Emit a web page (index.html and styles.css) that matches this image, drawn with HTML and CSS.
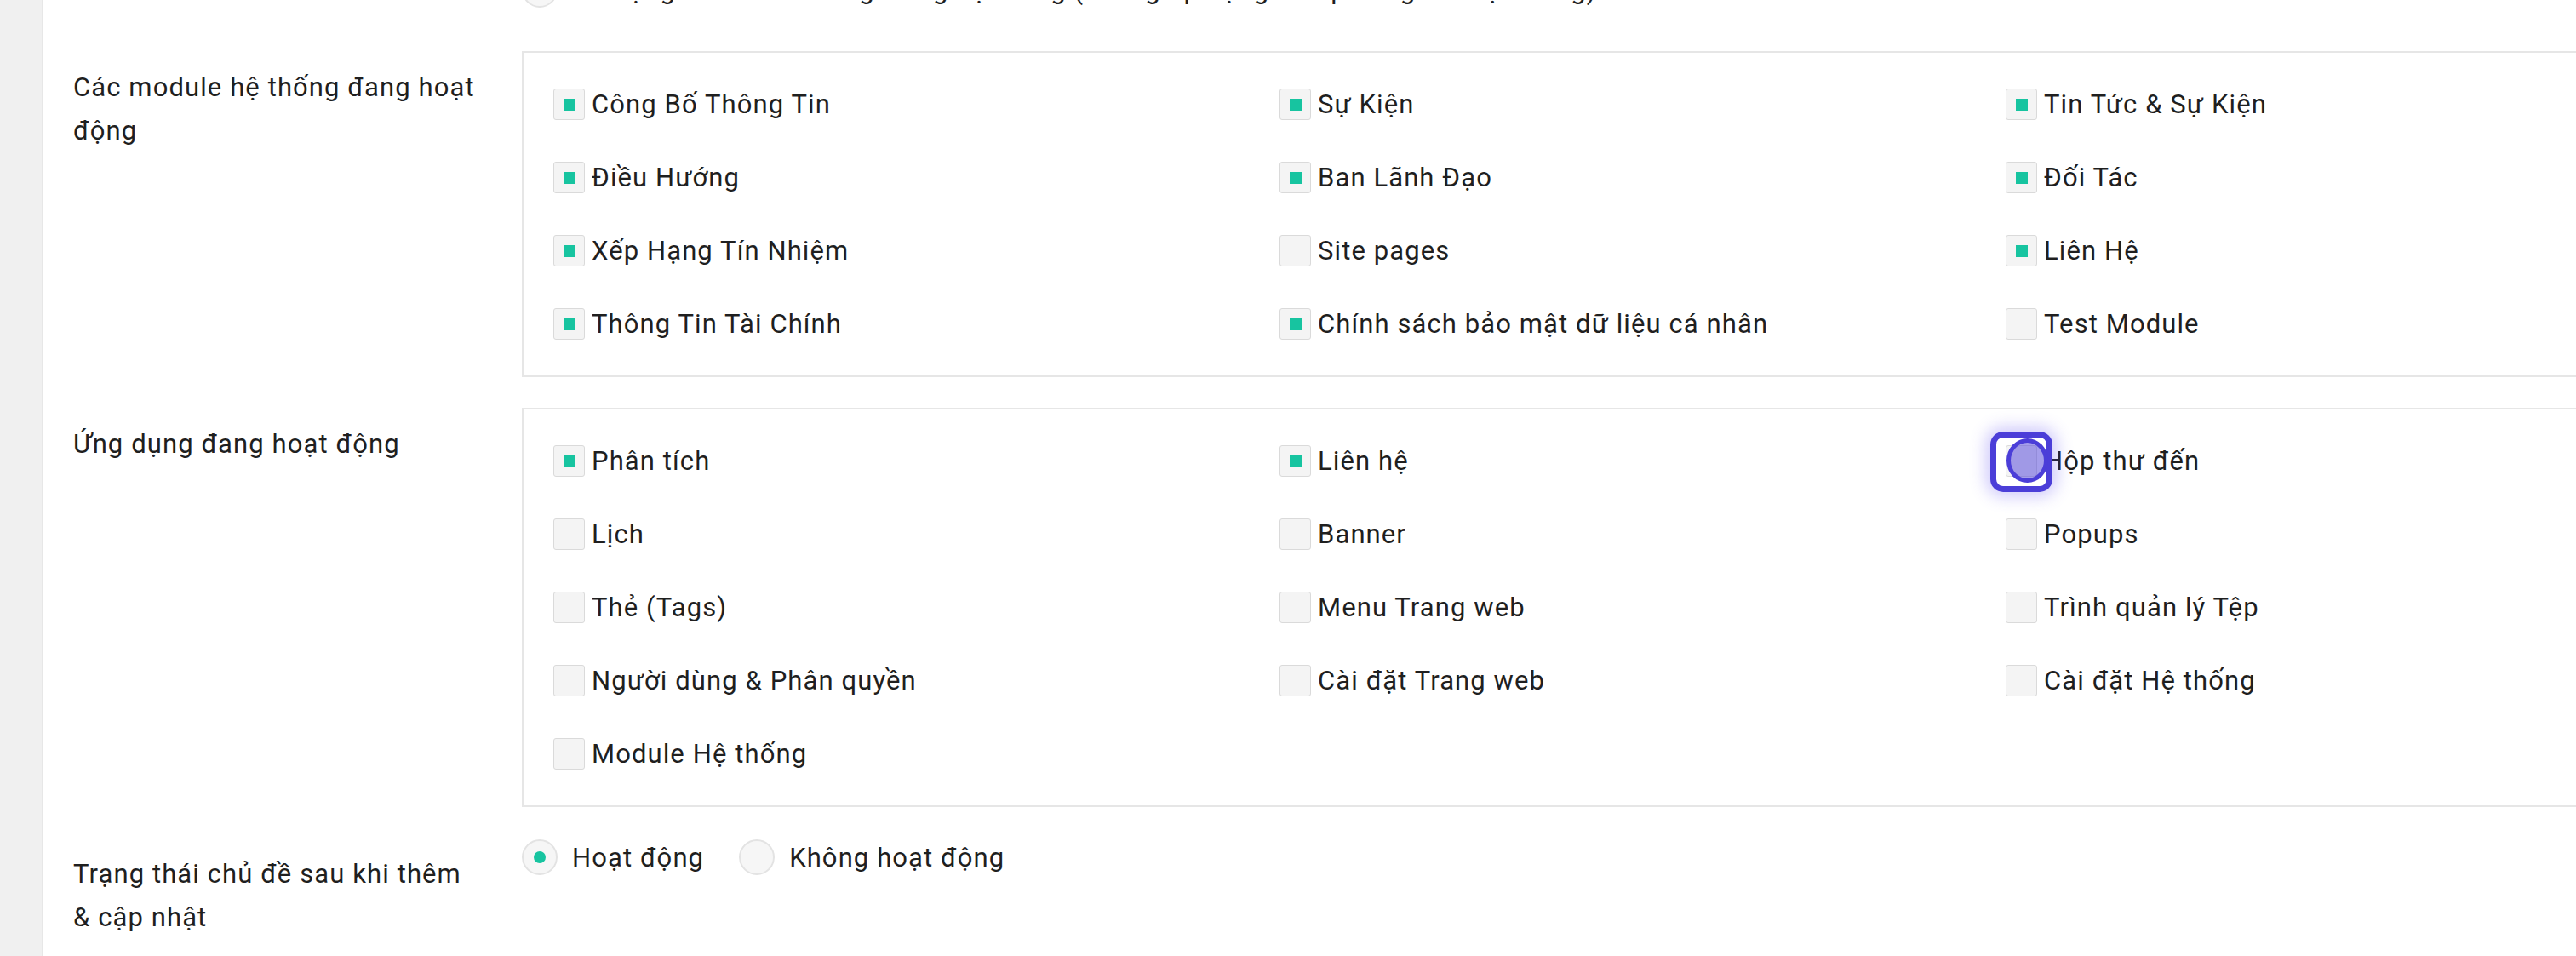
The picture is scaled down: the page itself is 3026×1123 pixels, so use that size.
FILE: index.html
```html
<!DOCTYPE html>
<html lang="vi">
<head>
<meta charset="utf-8">
<title>Cài đặt chủ đề</title>
<link rel="stylesheet" href="styles.css">
</head>
<body>
<div class="layout">
  <aside class="sidebar"></aside>
  <main class="content">
    <div class="form">
      <div class="row">
        <div class="label">Chế độ áp dụng</div>
        <div class="radio-list">
          <label class="radio-opt"><span class="radio"></span><span>Áp dụng riêng cho từng chủ đề</span></label>
          <label class="radio-opt"><span class="radio"></span><span>Sử dụng cấu hình chung trong hệ thống (không áp dụng cho phần giao diện riêng)</span></label>
        </div>
      </div>

      <div class="row">
        <div class="label">Các module hệ thống đang hoạt động</div>
        <div class="box">
          <label class="check"><span class="cb on"></span><span>Công Bố Thông Tin</span></label>
          <label class="check"><span class="cb on"></span><span>Sự Kiện</span></label>
          <label class="check"><span class="cb on"></span><span>Tin Tức &amp; Sự Kiện</span></label>
          <label class="check"><span class="cb on"></span><span>Điều Hướng</span></label>
          <label class="check"><span class="cb on"></span><span>Ban Lãnh Đạo</span></label>
          <label class="check"><span class="cb on"></span><span>Đối Tác</span></label>
          <label class="check"><span class="cb on"></span><span>Xếp Hạng Tín Nhiệm</span></label>
          <label class="check"><span class="cb"></span><span>Site pages</span></label>
          <label class="check"><span class="cb on"></span><span>Liên Hệ</span></label>
          <label class="check"><span class="cb on"></span><span>Thông Tin Tài Chính</span></label>
          <label class="check"><span class="cb on"></span><span>Chính sách bảo mật dữ liệu cá nhân</span></label>
          <label class="check"><span class="cb"></span><span>Test Module</span></label>
        </div>
      </div>

      <div class="row">
        <div class="label">Ứng dụng đang hoạt động</div>
        <div class="box">
          <label class="check"><span class="cb on"></span><span>Phân tích</span></label>
          <label class="check"><span class="cb on"></span><span>Liên hệ</span></label>
          <label class="check"><span class="cb focus"><span class="tap"></span></span><span>Hộp thư đến</span></label>
          <label class="check"><span class="cb"></span><span>Lịch</span></label>
          <label class="check"><span class="cb"></span><span>Banner</span></label>
          <label class="check"><span class="cb"></span><span>Popups</span></label>
          <label class="check"><span class="cb"></span><span>Thẻ (Tags)</span></label>
          <label class="check"><span class="cb"></span><span>Menu Trang web</span></label>
          <label class="check"><span class="cb"></span><span>Trình quản lý Tệp</span></label>
          <label class="check"><span class="cb"></span><span>Người dùng &amp; Phân quyền</span></label>
          <label class="check"><span class="cb"></span><span>Cài đặt Trang web</span></label>
          <label class="check"><span class="cb"></span><span>Cài đặt Hệ thống</span></label>
          <label class="check"><span class="cb"></span><span>Module Hệ thống</span></label>
        </div>
      </div>

      <div class="row">
        <div class="label">Trạng thái chủ đề sau khi thêm &amp; cập nhật</div>
        <div class="radio-inline">
          <label class="radio-opt"><span class="radio on"></span><span>Hoạt động</span></label>
          <label class="radio-opt"><span class="radio"></span><span>Không hoạt động</span></label>
        </div>
      </div>
    </div>
  </main>
</div>
</body>
</html>
```

FILE: styles.css
```css
html, body {
  margin: 0;
  padding: 0;
  overflow: hidden;
  background: #ffffff;
}

body {
  font-family: Roboto, "Noto Sans", "Liberation Sans", sans-serif;
  font-size: 31px;
  letter-spacing: 1.1px;
  color: #1f1f1f;
  width: 3026px;
  height: 1123px;
}

.layout {
  display: flex;
  min-height: 1123px;
  width: 3400px;
}

.sidebar {
  flex: none;
  width: 49px;
  background: #f0f0f0;
  border-right: 1px solid #e7e7e7;
}

.content {
  flex: 1;
  padding-left: 36px;
}

.form {
  margin-top: -97px;
  display: flex;
  flex-direction: column;
  gap: 36px;
}

.row {
  display: grid;
  grid-template-columns: 527px 1fr;
  align-items: start;
}

.label {
  padding: 17px 46px 0 0;
  line-height: 51px;
}

/* checkbox boxes */
.box {
  border: 2px solid #e6e6e6;
  padding: 42px 0 42px 35px;
  display: grid;
  grid-template-columns: repeat(3, 853px);
  row-gap: 49px;
}

.check {
  display: flex;
  align-items: center;
  gap: 8px;
  height: 37px;
  white-space: nowrap;
}

.cb {
  flex: none;
  box-sizing: border-box;
  width: 37px;
  height: 37px;
  border: 1px solid #dadada;
  border-radius: 3px;
  background: #f4f4f4;
  display: flex;
  align-items: center;
  justify-content: center;
}

.cb.on::after {
  content: "";
  width: 14px;
  height: 14px;
  background: #17c4a0;
}

.cb.focus {
  position: relative;
}

.cb.focus::before {
  content: "";
  position: absolute;
  left: -19px;
  top: -17px;
  right: -19px;
  bottom: -19px;
  border: 7px solid #4b3ed8;
  border-radius: 15px;
  box-shadow: 0 0 18px 6px rgba(95, 75, 240, 0.28);
}

.tap {
  position: absolute;
  left: 0;
  top: -9px;
  box-sizing: border-box;
  width: 49px;
  height: 52px;
  border-radius: 50%;
  border: 5px solid #4b3ed8;
  background: rgba(75, 62, 216, 0.5);
}

/* radios */
.radio-list {
  display: flex;
  flex-direction: column;
  gap: 20px;
  padding: 2px 0 15px;
}

.radio-inline {
  display: flex;
  gap: 41px;
  padding-top: 2px;
}

.radio-opt {
  display: flex;
  align-items: center;
  gap: 17px;
  white-space: nowrap;
}

.radio {
  flex: none;
  box-sizing: border-box;
  width: 42px;
  height: 42px;
  border-radius: 50%;
  border: 2px solid #e3e3e3;
  background: #f6f6f6;
  display: flex;
  align-items: center;
  justify-content: center;
}

.radio.on::after {
  content: "";
  width: 14px;
  height: 14px;
  border-radius: 50%;
  background: #17c4a0;
}
```
